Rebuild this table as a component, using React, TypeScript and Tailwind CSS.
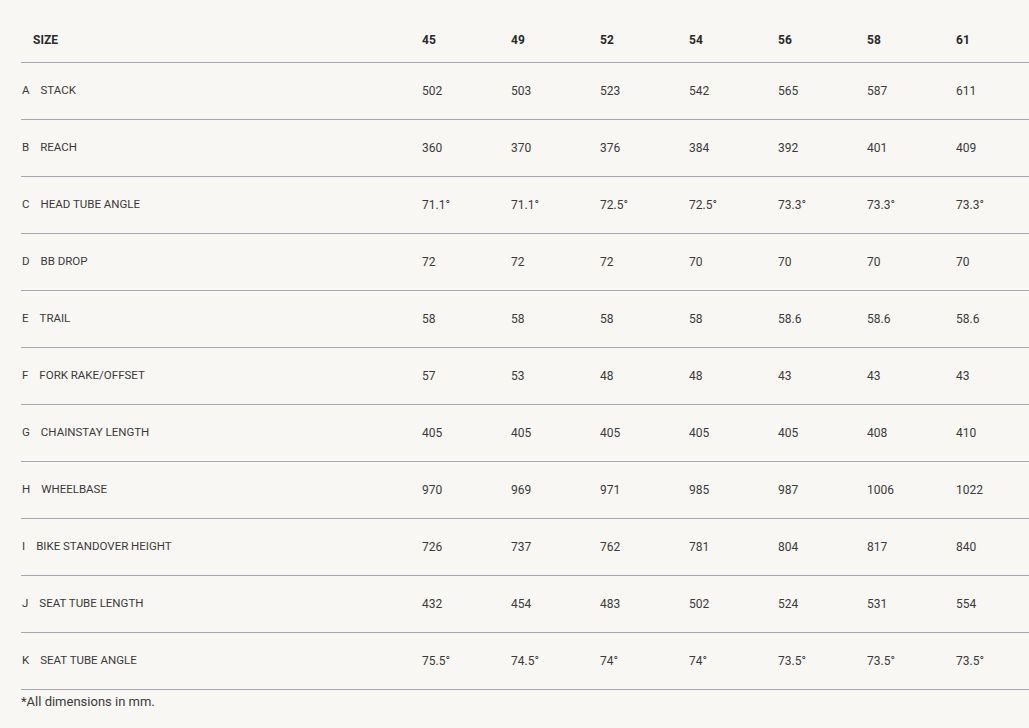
const sizes = ["45", "49", "52", "54", "56", "58", "61"];

const rows: { key: string; label: string; values: string[] }[] = [
  { key: "A", label: "STACK", values: ["502", "503", "523", "542", "565", "587", "611"] },
  { key: "B", label: "REACH", values: ["360", "370", "376", "384", "392", "401", "409"] },
  { key: "C", label: "HEAD TUBE ANGLE", values: ["71.1°", "71.1°", "72.5°", "72.5°", "73.3°", "73.3°", "73.3°"] },
  { key: "D", label: "BB DROP", values: ["72", "72", "72", "70", "70", "70", "70"] },
  { key: "E", label: "TRAIL", values: ["58", "58", "58", "58", "58.6", "58.6", "58.6"] },
  { key: "F", label: "FORK RAKE/OFFSET", values: ["57", "53", "48", "48", "43", "43", "43"] },
  { key: "G", label: "CHAINSTAY LENGTH", values: ["405", "405", "405", "405", "405", "408", "410"] },
  { key: "H", label: "WHEELBASE", values: ["970", "969", "971", "985", "987", "1006", "1022"] },
  { key: "I", label: "BIKE STANDOVER HEIGHT", values: ["726", "737", "762", "781", "804", "817", "840"] },
  { key: "J", label: "SEAT TUBE LENGTH", values: ["432", "454", "483", "502", "524", "531", "554"] },
  { key: "K", label: "SEAT TUBE ANGLE", values: ["75.5°", "74.5°", "74°", "74°", "73.5°", "73.5°", "73.5°"] },
];

export default function App() {
  return (
    <div className="min-h-[728px] w-full overflow-hidden bg-[#f8f7f3] pt-[17px] font-['Roboto',sans-serif] text-[#3a3a3a]">
      <div className="ml-[21px] w-[1024px]">
        <div className="grid h-[46px] grid-cols-[401px_repeat(7,89px)] items-center border-b border-[#a3a8b4] text-[12px] font-bold text-[#2a2a2a]">
          <div className="pl-3">SIZE</div>
          {sizes.map((s) => (
            <div key={s}>{s}</div>
          ))}
        </div>
        {rows.map((r) => (
          <div
            key={r.key}
            className="grid h-[57px] grid-cols-[401px_repeat(7,89px)] items-center border-b border-[#a3a8b4] text-[12px]"
          >
            <div className="flex items-center pl-[1px] text-[11.5px]">
              <span className="mr-[11px]">{r.key}</span>
              <span>{r.label}</span>
            </div>
            {r.values.map((v, i) => (
              <div key={i}>{v}</div>
            ))}
          </div>
        ))}
        <p className="pt-[2px] text-[13px] text-[#3a3a3a]">*All dimensions in mm.</p>
      </div>
    </div>
  );
}
